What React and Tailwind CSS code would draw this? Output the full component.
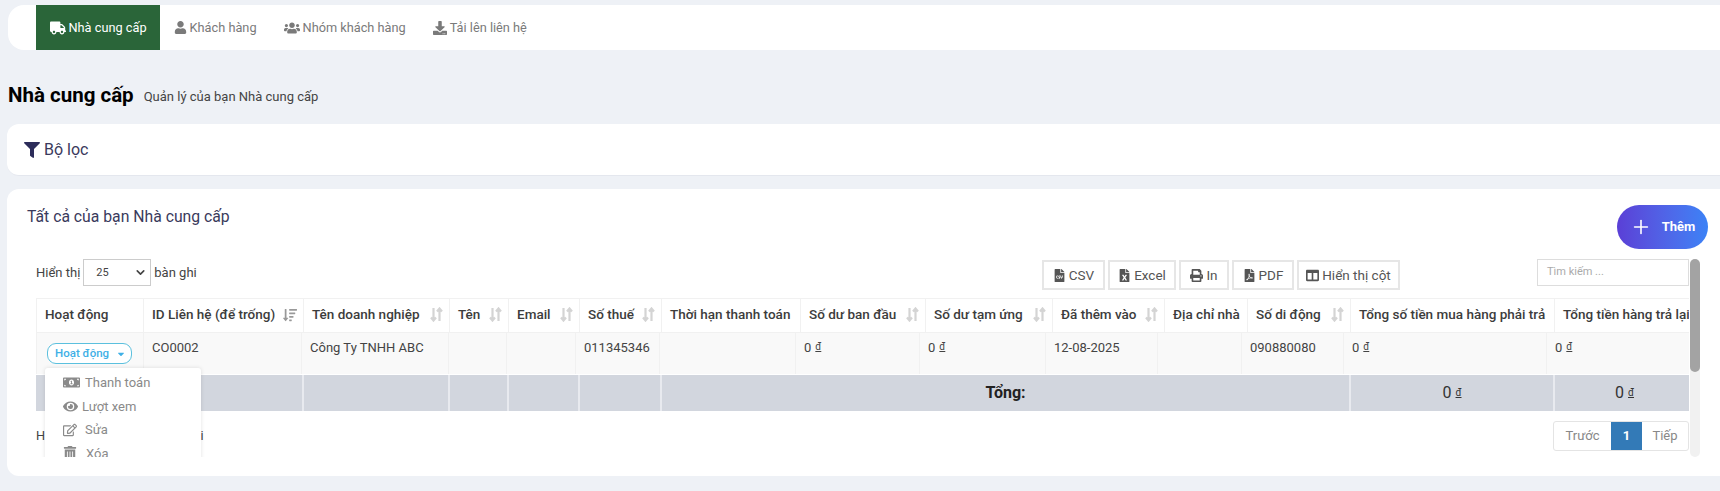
import React from "react";
import { FaTruck, FaUser, FaUsers, FaDownload, FaFilter, FaFileCsv, FaFileExcel, FaPrint, FaFilePdf, FaColumns, FaMoneyBillAlt, FaEye, FaRegEdit, FaTrashAlt, FaSortAmountDown, FaCaretDown } from "react-icons/fa";
import { Plus, ChevronDown } from "lucide-react";

const headW = [107, 160, 146, 59, 71, 82, 139, 125, 127, 112, 83, 103, 204, 260];
const bodyW = [107, 158, 147, 58, 69, 84, 136, 124, 126, 112, 84, 102, 203, 260];

const headers = [
  ["Hoạt động", 0],
  ["ID Liên hệ (để trống)", 2],
  ["Tên doanh nghiệp", 1],
  ["Tên", 1],
  ["Email", 1],
  ["Số thuế", 1],
  ["Thời hạn thanh toán", 0],
  ["Số dư ban đầu", 1],
  ["Số dư tạm ứng", 1],
  ["Đã thêm vào", 1],
  ["Địa chỉ nhà", 0],
  ["Số di động", 1],
  ["Tổng số tiền mua hàng phải trả", 0],
  ["Tổng tiền hàng trả lại", 0],
];

const Dong = () => <span className="ml-1 text-[10px] underline align-[2px]">đ</span>;

const row = ["", "CO0002", "Công Ty TNHH ABC", "", "", "011345346", "", "d", "d", "12-08-2025", "", "090880080", "d", "d"];

function SortIdle() {
  return (
    <svg width="13" height="15" viewBox="0 0 13 15" className="shrink-0 text-[#d4d4d4]" fill="none" stroke="currentColor" strokeWidth="2.2">
      <path d="M3.5 1v12M1 10.5l2.5 3 2.5-3" />
      <path d="M9.5 14V2M7 4.5l2.5-3 2.5 3" />
    </svg>
  );
}

function Cols({ w }) {
  return (
    <colgroup>
      {w.map((x, i) => (
        <col key={i} style={{ width: x }} />
      ))}
    </colgroup>
  );
}

function TabItem({ icon, label, active }) {
  return (
    <div className={`flex items-center gap-[3px] px-[13.5px] text-[12.75px] ${active ? "bg-[#2a6539] text-white" : "text-[#7a7a7a]"}`}>
      {icon}
      <span>{label}</span>
    </div>
  );
}

function ToolBtn({ icon, label, w }) {
  return (
    <div className={`flex h-[30px] items-center justify-center gap-[3px] border-2 border-[#e6e6e6] text-[13.5px] text-[#555] ${w}`}>
      {icon}
      <span>{label}</span>
    </div>
  );
}

function MenuItem({ icon, label, gap }) {
  return (
    <div className={`flex h-[23.5px] items-center pl-[18px] text-[13px] text-[#8a8a8a] ${gap}`}>
      {icon}
      <span>{label}</span>
    </div>
  );
}

export default function App() {
  return (
    <div className="h-[491px] w-[1720px] overflow-hidden bg-[#eef1f6] font-['Roboto',sans-serif] text-[13px] text-[#333]">
      <nav className="ml-2 mt-[5px] flex h-[45px] rounded-l-2xl bg-white pl-7">
        <TabItem active icon={<FaTruck className="text-[16px]" />} label="Nhà cung cấp" />
        <TabItem icon={<FaUser className="text-[13px]" />} label="Khách hàng" />
        <TabItem icon={<FaUsers className="text-[16px]" />} label="Nhóm khách hàng" />
        <TabItem icon={<FaDownload className="text-[14px]" />} label="Tải lên liên hệ" />
      </nav>

      <div className="ml-[8px] mt-[31px] flex h-[29px] items-center gap-[10px]">
        <h1 className="text-[20.5px] font-bold leading-none text-black">Nhà cung cấp</h1>
        <span className="mt-[3px] text-[13px] text-[#444]">Quản lý của bạn Nhà cung cấp</span>
      </div>

      <section className="ml-[7px] mt-[14px] flex h-[52px] items-center gap-[4px] rounded-l-xl border-b border-[#e4e7ee] bg-white pl-[17px] text-[16px] text-[#3a3a5c]">
        <FaFilter className="text-[16px] text-[#2c2c5a]" />
        <span>Bộ lọc</span>
      </section>

      <section className="ml-[7px] mt-[13px] h-[287px] rounded-l-xl bg-white pl-[20px] pt-[15px]">
        <div className="flex h-[55px] items-start justify-between pr-[12px]">
          <h2 className="mt-[1px] text-[15.75px] font-normal text-[#3a3a5c]">Tất cả của bạn Nhà cung cấp</h2>
          <div className="mt-px flex h-[44px] w-[91px] items-center justify-center gap-[10px] rounded-full bg-gradient-to-r from-[#5a3fd6] to-[#3b82f6] text-[13px] font-bold text-white">
            <Plus size={22} strokeWidth={1.75} />
            <span>Thêm</span>
          </div>
        </div>

        <div className="flex h-[198px] pl-[9px]">
          <div className="relative w-[1653px] overflow-hidden">
            <div className="flex h-[39px] items-start justify-between">
              <div className="flex h-[27px] items-center gap-[3px] text-[13px] text-[#444]">
                <span>Hiển thị</span>
                <div className="flex h-[27px] w-[68px] items-center justify-between border border-[#ccc] pb-px pl-[12px] pr-[3px] text-[11px]">
                  <span className="mt-[3px]">25</span>
                  <ChevronDown size={13} strokeWidth={3} />
                </div>
                <span>bàn ghi</span>
              </div>
              <div className="ml-auto mr-[137px] mt-[1px] flex gap-[3px]">
                <ToolBtn w="w-[63px]" icon={<FaFileCsv className="text-[13px]" />} label="CSV" />
                <ToolBtn w="w-[68px]" icon={<FaFileExcel className="text-[13px]" />} label="Excel" />
                <ToolBtn w="w-[50px]" icon={<FaPrint className="text-[13px]" />} label="In" />
                <ToolBtn w="w-[62px]" icon={<FaFilePdf className="text-[13px]" />} label="PDF" />
                <ToolBtn w="w-[103px]" icon={<FaColumns className="text-[13px]" />} label="Hiển thị cột" />
              </div>
              <div className="flex h-[27px] w-[152px] items-center border border-[#ddd] pl-[9px] text-[11px] text-[#aaa]">Tìm kiếm ...</div>
            </div>

            <table className="w-[1777px] table-fixed border-collapse">
              <Cols w={headW} />
              <thead>
                <tr className="h-[34px] border-y border-[#f1f1f1]">
                  {headers.map(([t, s], i) => (
                    <th key={i} className="overflow-hidden whitespace-nowrap border-x border-[#f1f1f1] pb-[2px] pl-[8px] text-left text-[13.5px] font-medium text-[#3c3c3c]">
                      <div className="flex items-center justify-between pr-[6px]">
                        <span>{t}</span>
                        {s === 1 && <SortIdle />}
                        {s === 2 && <FaSortAmountDown className="shrink-0 text-[14px] text-[#999]" />}
                      </div>
                    </th>
                  ))}
                </tr>
              </thead>
            </table>

            <table className="w-[1770px] table-fixed border-collapse">
              <Cols w={bodyW} />
              <tbody>
                <tr className="h-[41px] bg-[#f9f9f9]">
                  {row.map((t, i) => (
                    <td key={i} className="border-x border-[#f1f1f1] pl-[8px] pt-[5px] align-top text-[13px] text-[#444]">
                      {i === 0 ? (
                        <div className="ml-[2px] mt-[5px] flex h-[21px] w-[85px] items-center gap-[7px] rounded-[9px] border-[1.5px] border-[#5bc0de] bg-white pl-[7px] text-[11.5px] font-medium text-[#3fb0e6]">
                          <span>Hoạt động</span>
                          <FaCaretDown className="text-[10px]" />
                        </div>
                      ) : t === "d" ? (
                        <span>0<Dong /></span>
                      ) : (
                        t
                      )}
                    </td>
                  ))}
                </tr>
              </tbody>
            </table>

            <table className="mt-px w-[1777px] table-fixed border-collapse">
              <Cols w={headW} />
              <tfoot>
                <tr className="h-[36px] bg-[#d2d6de] text-[16px]">
                  <td className="border-r-2 border-[#e8eaef]" colSpan={2}></td>
                  <td className="border-r-2 border-[#e8eaef]"></td>
                  <td className="border-r-2 border-[#e8eaef]"></td>
                  <td className="border-r-2 border-[#e8eaef]"></td>
                  <td className="border-r-2 border-[#e8eaef]"></td>
                  <td className="border-r-2 border-[#e8eaef] text-center font-bold text-[#222]" colSpan={6}>Tổng:</td>
                  <td className="border-r-2 border-[#e8eaef] text-center text-[#333]">0<Dong /></td>
                  <td className="pr-[120px] text-center text-[#333]">0<Dong /></td>
                </tr>
              </tfoot>
            </table>

            <div className="mt-[10px] flex h-[30px] items-center justify-between">
              <span className="text-[12.75px] text-[#444]">Hiển thị 1 đến 1 của 1 bản ghi</span>
              <div className="flex h-[30px] overflow-hidden rounded-[3px] border border-[#e4e4e4] text-[13px] text-[#888]">
                <div className="flex w-[57px] items-center justify-center">Trước</div>
                <div className="flex w-[31px] items-center justify-center bg-[#337ab7] font-bold text-white">1</div>
                <div className="flex w-[46px] items-center justify-center">Tiếp</div>
              </div>
            </div>

            <div className="absolute left-[9px] top-[109px] h-[100px] w-[156px] rounded-[3px] bg-white pt-[3px] shadow-[0_0_4px_rgba(0,0,0,0.12)]">
              <MenuItem gap="gap-[5px]" icon={<FaMoneyBillAlt className="text-[17px]" />} label="Thanh toán" />
              <MenuItem gap="gap-[4px]" icon={<FaEye className="text-[15px]" />} label="Lượt xem" />
              <MenuItem gap="gap-[8px]" icon={<FaRegEdit className="text-[14px]" />} label="Sửa" />
              <MenuItem gap="gap-[9px]" icon={<FaTrashAlt className="text-[14px]" />} label="Xóa" />
            </div>
          </div>

          <div className="ml-px h-full w-[10px] rounded-full bg-[#f1f1f1]">
            <div className="h-[113px] w-full rounded-full bg-[#a3a3a3]" />
          </div>
        </div>
      </section>
    </div>
  );
}
